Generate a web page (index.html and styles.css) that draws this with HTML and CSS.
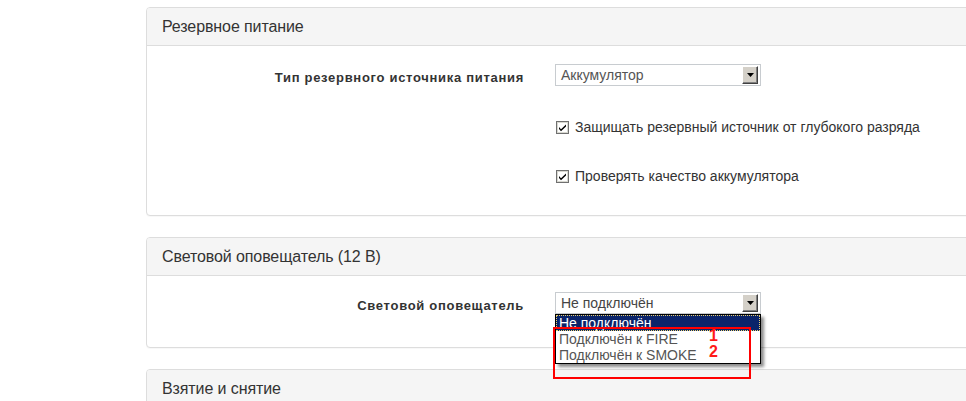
FILE: index.html
```html
<!DOCTYPE html>
<html lang="ru">
<head>
<meta charset="utf-8">
<title>Настройки</title>
<link rel="stylesheet" href="styles.css">
</head>
<body>
<div class="page">
  <section class="panel">
    <div class="panel-heading">Резервное питание</div>
    <div class="panel-body body-power">
      <div class="row">
        <div class="label">Тип резервного источника питания</div>
        <div class="control">
          <div class="select">
            <span class="select-text">Аккумулятор</span>
            <span class="select-btn"><svg width="7" height="4" viewBox="0 0 7 4"><path d="M0 0h7L3.5 4z" fill="#000"/></svg></span>
          </div>
        </div>
      </div>
      <div class="row check-row first-check">
        <div class="label"></div>
        <div class="control check">
          <svg class="cb" width="13" height="13" viewBox="0 0 13 13"><rect x="0.5" y="0.5" width="12" height="12" fill="#f4f4f0" stroke="#707070"/><rect x="1.5" y="1.5" width="10" height="10" fill="#fff" stroke="#d8d8d0"/><path d="M3 6l2 2.2L10 3.5v2L5 10.2 3 8z" fill="#000"/></svg>
          <span>Защищать резервный источник от глубокого разряда</span>
        </div>
      </div>
      <div class="row check-row second-check">
        <div class="label"></div>
        <div class="control check">
          <svg class="cb" width="13" height="13" viewBox="0 0 13 13"><rect x="0.5" y="0.5" width="12" height="12" fill="#f4f4f0" stroke="#707070"/><rect x="1.5" y="1.5" width="10" height="10" fill="#fff" stroke="#d8d8d0"/><path d="M3 6l2 2.2L10 3.5v2L5 10.2 3 8z" fill="#000"/></svg>
          <span>Проверять качество аккумулятора</span>
        </div>
      </div>
    </div>
  </section>

  <section class="panel">
    <div class="panel-heading">Световой оповещатель (12 В)</div>
    <div class="panel-body body-light">
      <div class="row">
        <div class="label">Световой оповещатель</div>
        <div class="control dropwrap">
          <div class="select">
            <span class="select-text dark">Не подключён</span>
            <span class="select-btn"><svg width="7" height="4" viewBox="0 0 7 4"><path d="M0 0h7L3.5 4z" fill="#000"/></svg></span>
          </div>
          <ul class="dropdown">
            <li class="opt selected">Не подключён</li>
            <li class="opt">Подключён к FIRE</li>
            <li class="opt">Подключён к SMOKE</li>
          </ul>
          <div class="annot-box"></div>
          <span class="annot-num n1">1</span>
          <span class="annot-num n2">2</span>
        </div>
      </div>
    </div>
  </section>

  <section class="panel">
    <div class="panel-heading">Взятие и снятие</div>
  </section>
</div>
</body>
</html>
```

FILE: styles.css
```css
html, body {
  margin: 0;
  padding: 0;
  background: #fff;
  overflow: hidden;
}
body {
  font-family: "Liberation Sans", Arial, sans-serif;
  color: #333;
}
.page {
  margin-left: 146px;
  padding-top: 7px;
  width: 840px;
}
.panel {
  border: 1px solid #ddd;
  border-radius: 4px;
  margin-bottom: 21px;
  background: #fff;
  box-shadow: 0 1px 1px rgba(0,0,0,0.03);
}
.panel-heading {
  background: #f5f5f5;
  border-bottom: 1px solid #ddd;
  border-radius: 3px 3px 0 0;
  height: 37px;
  line-height: 37px;
  padding: 0 15px;
  font-size: 16px;
  color: #333;
  letter-spacing: -0.1px;
}
.panel-body {
  padding: 0;
}
.body-power {
  padding-top: 18px;
  padding-bottom: 29px;
}
.body-light {
  padding-top: 16px;
  padding-bottom: 33px;
}
.row {
  display: flex;
  align-items: flex-start;
}
.label {
  width: 377px;
  flex: none;
  text-align: right;
  font-weight: bold;
  font-size: 13px;
  color: #333;
  padding-top: 6px;
  letter-spacing: 0.7px;
  box-sizing: border-box;
}
.control {
  margin-left: 31px;
  position: relative;
}
.select {
  width: 206px;
  height: 22px;
  box-sizing: border-box;
  border: 1px solid #c8ccd0;
  background: #fff;
  display: flex;
  align-items: center;
  justify-content: space-between;
  padding: 0 2px 0 5px;
}
.select-text {
  font-size: 14px;
  color: #555;
  line-height: 20px;
}
.select-text.dark {
  color: #444;
}
.select-btn {
  width: 16px;
  height: 18px;
  box-sizing: border-box;
  background: #d4d0c8;
  border-top: 1px solid #fff;
  border-left: 1px solid #fff;
  border-right: 1px solid #404040;
  border-bottom: 1px solid #404040;
  box-shadow: inset -1px -1px 0 #808080;
  display: flex;
  align-items: center;
  justify-content: center;
}
.check-row .control {
  display: flex;
  align-items: center;
  height: 20px;
  margin-left: 32px;
}
.first-check {
  margin-top: 31px;
}
.second-check {
  margin-top: 29px;
}
.cb {
  flex: none;
  margin-right: 6px;
}
.check span {
  font-size: 14px;
  color: #333;
}
.dropdown {
  position: absolute;
  left: 0;
  top: 22px;
  width: 206px;
  box-sizing: border-box;
  margin: 0;
  padding: 0;
  list-style: none;
  background: #fff;
  border: 1px solid #000;
  box-shadow: 3px 3px 3px rgba(0,0,0,0.45);
  z-index: 2;
}
.opt {
  font-size: 14px;
  line-height: 16px;
  height: 16px;
  padding: 0 3px;
  color: #555;
  white-space: nowrap;
}
.opt.selected {
  background: #0a246a;
  color: #fff;
  outline: 1px dotted #e8d070;
  outline-offset: -1px;
}
.annot-box {
  position: absolute;
  left: -2px;
  top: 35px;
  width: 198px;
  height: 52px;
  box-sizing: border-box;
  border: 2px solid #ff0000;
  z-index: 3;
}
.annot-num {
  position: absolute;
  left: 154px;
  color: #ff1a1a;
  font-weight: bold;
  font-size: 16px;
  line-height: 14px;
  height: 14px;
  z-index: 4;
}
.n1 { top: 37px; }
.n2 { top: 53px; }
```
